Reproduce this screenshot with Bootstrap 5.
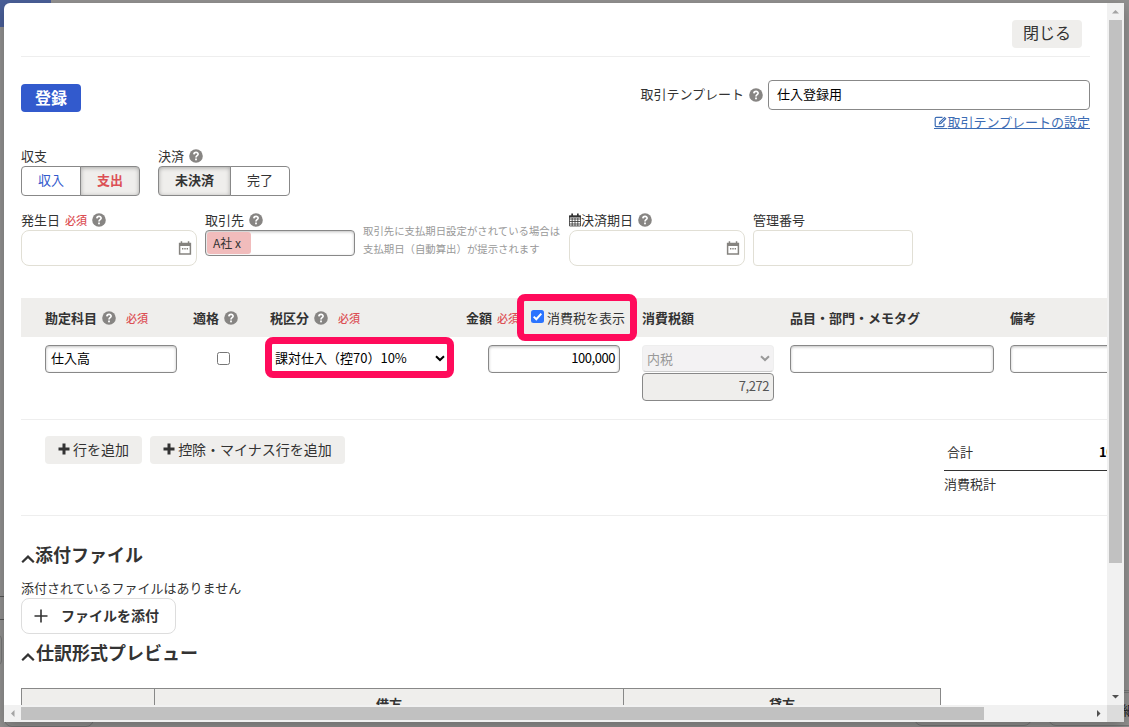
<!DOCTYPE html>
<html lang="ja">
<head>
<meta charset="utf-8">
<title>取引登録</title>
<link href="https://cdn.jsdelivr.net/npm/bootstrap@5.3.0/dist/css/bootstrap.min.css" rel="stylesheet">
<style>
body{width:1129px;height:727px;overflow:hidden;background:#929190;font:13px/20px "Noto Sans CJK JP",sans-serif;color:#333;padding:3px 5px 5px 4px;position:relative}
.back-item{position:absolute}
.dialog{width:1120px;height:719px;display:grid;grid-template:702px 17px / 1103px 17px;background:#fff;border-radius:6px 0 0 0;overflow:hidden}
.dialog-shadow{box-shadow:0 5px 14px rgba(0,0,0,.25);position:relative;width:1120px;border-radius:6px 0 0 0}
.view{overflow:hidden;padding-left:17px}
.head{width:1069px;height:54px;border-bottom:1px solid #eee;padding:17px 8px 0 0}
.soft{background:#efeeec;border-radius:4px;height:28px;color:#333;display:flex;align-items:center;justify-content:center;border:0;padding:0 0 2px;font-size:14px;line-height:20px}
.close-b{width:70px;font-size:16px;padding-bottom:4px}
.top-row{width:1069px;height:85px;padding-top:23px}
.save{width:60px;height:28px;background:#325acd;border-radius:4px;color:#fff;font-weight:700;font-size:16px;line-height:24px;padding:0 0 2px;border:0;margin-top:4px}
.tpl{width:322px;height:30px;border:1px solid #888;border-radius:4px;padding:0 8px;line-height:25px;color:#000;margin-left:5px}
.set-link{color:#3c6cb4;line-height:20px;margin-top:2px;text-decoration:underline}
.set-link svg{border-bottom:1px solid #3c6cb4;margin-top:1px}
.q{width:14px;height:14px;flex:none}
.lbl{height:20px;line-height:20px;display:flex;align-items:center;white-space:nowrap}
.req{color:#dc4f54;font-size:11px;font-weight:500}
.bt{border:1px solid #888;height:30px;line-height:25px;text-align:center;background:#fff}
.bt.on{background:#efeeec;font-weight:700;box-shadow:inset 0 1px 4px rgba(0,0,0,.3)}
.bt:first-child{border-radius:4px 0 0 4px}.bt:last-child{border-radius:0 4px 4px 0;margin-left:-1px}
.fields{height:88px;gap:8px;margin-top:14px}
.date{width:176px;height:36px;border:1px solid #e1dfd5;border-radius:8px;padding:0 4px;display:flex;align-items:center;justify-content:flex-end}
.inp{height:28px;border:1px solid #888;border-radius:4px;box-shadow:inset 0 1px 3px rgba(0,0,0,.25);background:#fff;color:#000;padding:0 5px;line-height:24px}
.num{letter-spacing:-.45px}
.tagbox{width:150px;height:26px;padding:1px}
.chip{background:#f1bcbc;border-radius:3px;width:44px;height:22px;font-size:12px;line-height:21px;padding-left:6px;color:#333}
.hint{font-size:10.4px;line-height:18px;color:#999;width:198px;padding-top:12px;white-space:nowrap}
.cols{display:grid;grid-template-columns:148px 77px 196px 176px 148px 220px 220px;padding-left:24px;width:1215px}
.thead-r{background:#efeeec;height:39px;align-items:center;font-weight:700}
.body-r{height:83px;padding-top:8px;border-bottom:1px solid #eee;align-items:start}
.body-r>*{min-width:0}
.cb{width:13px;height:13px;border:1px solid #767676;border-radius:2.5px;background:#fff;flex:none}
.cb.on{background:#2b74ff;border:0}
.mark-box{border:7px solid #ff0b5b;border-radius:8px}
.show-tax{position:absolute;left:51px;top:-14px;width:120px;height:47px;background:#efeeec;display:flex;align-items:center;font-weight:400;padding:1px 0 0 7px;white-space:nowrap}
.pick{width:189px;height:41px;margin:-8px 0 0 -5px;background:#fff;color:#000;display:flex;align-items:center;justify-content:space-between;padding:0 2px 0 3px;white-space:nowrap;border-radius:8px}
.dis{width:132px;height:27px;background:#f3f2f3;border-radius:4px;border:1px solid #eee;border-bottom:1px solid #ccc;color:#999;padding:0 3px 0 4px;display:flex;align-items:center;justify-content:space-between;margin-bottom:1px}
.actions{height:96px;width:1215px;border-bottom:1px solid #eee;padding:16px 0 0 24px}
.sum{width:260px;margin-left:599px;flex:none}
.sum1{height:35px;border-bottom:1px solid #333;padding:6px 0 0 3px}
.sec{font-size:18px;font-weight:700;line-height:26px;height:26px;display:flex;align-items:center}
.sec span{margin-top:-2px}
.attach{width:155px;height:36px;border:1px solid #ddd;border-radius:8px;font-weight:700;padding:0 0 1px 12px;display:flex;align-items:center;gap:13px;font-size:14px}
.attach span{margin-top:-1px}
.pv{width:920px;display:grid;grid-template-columns:132px 469px 317px;height:40px;border:1px solid #888;background:#efeeec;margin-top:22px;font-weight:700;text-align:center;line-height:29px}
.pv>div+div{border-left:1px solid #888}
.bar-v,.bar-h{background:#f1f1f1;display:flex;align-items:center}
.bar-v{flex-direction:column}
.arr{width:17px;height:17px;flex:none}
.th-v{width:13px;height:543px;background:#c1c1c1}
.th-h{height:13px;width:963px;background:#c1c1c1}
</style>
</head>
<body>
<svg width="0" height="0" style="position:absolute"><defs>
<symbol id="q" viewBox="0 0 14 14"><circle cx="7" cy="7" r="6.8" fill="#878583"/><path d="M4.9 5.4C5 2.7 9.2 2.8 9.1 5.2C9 6.7 7 6.7 7 8.4" fill="none" stroke="#fff" stroke-width="1.7"/><rect x="6.1" y="9.5" width="1.8" height="1.8" fill="#fff"/></symbol>
<symbol id="cal" viewBox="0 0 14 14"><path d="M1.6 2.5H12.4V12.9H1.6Z" fill="none" stroke="#85837f" stroke-width="1.5"/><path d="M1 2H13V5H1ZM2.7.3H4.2V3H2.7ZM9.8.3H11.3V3H9.8Z" fill="#85837f"/><path d="M4 7h1.4v1.4H4zM6.3 7h1.4v1.4H6.3zM8.6 7H10v1.4H8.6z" fill="#85837f"/></symbol>
<symbol id="chev" viewBox="0 0 10 7"><path d="M1 1.2L5 5L9 1.2" fill="none" stroke="currentColor" stroke-width="2"/></symbol>
<symbol id="plus" viewBox="0 0 12 12"><path d="M6 .5V11.5M.5 6H11.5" fill="none" stroke="#333" stroke-width="3"/></symbol>
<symbol id="up" viewBox="0 0 14 10"><path d="M1.2 8.3L7 2.6L12.8 8.3" fill="none" stroke="#333" stroke-width="2.2"/></symbol>
</defs></svg>
<div class="back-item" style="left:0;top:0;width:51px;height:27px;background:#4a5f98"></div>
<div class="back-item" style="left:0;top:596px;width:10px;height:24px;border:1px solid #555;border-left:0"></div>
<div class="back-item" style="left:-8px;top:635px;width:10px;height:30px;border:1px solid #777;border-radius:4px"></div>
<div class="back-item" style="left:1118px;top:692px;width:11px;border-top:1px solid #777"></div>
<div class="back-item text-nowrap" style="left:1122px;top:700px;width:7px;overflow:hidden;color:#222">細</div>
<div class="back-item" style="left:914px;top:690px;width:118px;height:36px;border:1px solid #777;border-radius:8px"></div>
<div class="back-item" style="left:1048px;top:690px;width:118px;height:36px;border:1px solid #777;border-radius:8px"></div>
<div class="back-item" style="left:4px;top:690px;width:90px;height:37px;border:1px solid #777;border-radius:8px"></div>

<div class="dialog-shadow"><div class="dialog">
<main class="view">
  <header class="head d-flex justify-content-end"><button class="soft close-b">閉じる</button></header>
  <div class="top-row d-flex justify-content-between align-items-start">
    <button class="save">登録</button>
    <div class="d-flex flex-column align-items-end">
      <div class="d-flex align-items-center"><span style="margin:-2px 5px 0 0">取引テンプレート</span><svg class="q"><use href="#q"/></svg><div class="tpl">仕入登録用</div></div>
      <a class="set-link d-flex align-items-center" href="#"><svg width="13" height="13" viewBox="0 0 13 12"><path d="M8.5 1.3H2.5Q1.2 1.3 1.2 2.6V9.4Q1.2 10.7 2.5 10.7H8.7Q10 10.7 10 9.4V7.4" fill="none" stroke="#3c6cb4" stroke-width="1.2"/><path d="M4.6 8.7L5.2 6.1L10.5.7L12.5 2.7L7.2 8Z" fill="#3c6cb4"/><path d="M6.2 6.9L10.6 2.5" stroke="#fff" stroke-width=".7"/></svg><span>取引テンプレートの設定</span></a>
    </div>
  </div>
  <div class="d-flex" style="gap:18px;padding-top:4px">
    <div><div class="lbl">収支</div><div class="d-flex"><div class="bt" style="width:60px;color:#325acd">収入</div><div class="bt on" style="width:60px;color:#dc4f54">支出</div></div></div>
    <div><div class="lbl">決済<svg class="q" style="margin-left:5px"><use href="#q"/></svg></div><div class="d-flex"><div class="bt on" style="width:73px">未決済</div><div class="bt" style="width:60px">完了</div></div></div>
  </div>
  <div class="fields d-flex">
    <div><div class="lbl">発生日<span class="req" style="margin:0 5px">必須</span><svg class="q"><use href="#q"/></svg></div><div class="date"><svg width="14" height="14"><use href="#cal"/></svg></div></div>
    <div><div class="lbl">取引先<svg class="q" style="margin-left:5px"><use href="#q"/></svg></div><div class="inp tagbox"><div class="chip">A社 x</div></div></div>
    <div class="hint">取引先に支払期日設定がされている場合は<br>支払期日（自動算出）が提示されます</div>
    <div><div class="lbl"><svg width="12" height="14" viewBox="0 0 12 14"><path d="M.5 3H11.5V13H.5ZM.5 6H11.5M.5 8.5H11.5M.5 11H11.5M3.2 5V13M6 5V13M8.8 5V13" fill="none" stroke="#333" stroke-width=".8"/><path d="M0 2.5H12V4.5H0ZM2.3.5H4V3H2.3ZM8 .5H9.7V3H8Z" fill="#333"/></svg>決済期日<svg class="q" style="margin-left:5px"><use href="#q"/></svg></div><div class="date"><svg width="14" height="14"><use href="#cal"/></svg></div></div>
    <div><div class="lbl">管理番号</div><div class="date" style="width:160px;border-radius:4px"></div></div>
  </div>
  <div class="cols thead-r">
    <div class="lbl">勘定科目<svg class="q" style="margin:0 10px 0 5px"><use href="#q"/></svg><span class="req">必須</span></div>
    <div class="lbl">適格<svg class="q" style="margin-left:5px"><use href="#q"/></svg></div>
    <div class="lbl">税区分<svg class="q" style="margin:0 10px 0 5px"><use href="#q"/></svg><span class="req">必須</span></div>
    <div class="lbl position-relative">金額<span class="req" style="margin-left:5px">必須</span><div class="show-tax mark-box"><span class="cb on" style="margin:-3px 3px 0 0"><svg class="d-block" width="13" height="13"><path d="M2.7 6.6L5.3 9.2L10.3 3.6" fill="none" stroke="#fff" stroke-width="2"/></svg></span>消費税を表示</div></div>
    <div>消費税額</div><div>品目・部門・メモタグ</div><div>備考</div>
  </div>
  <div class="cols body-r">
    <div class="inp" style="width:132px">仕入高</div>
    <div class="cb" style="margin:7px 0 0 24px"></div>
    <div class="pick mark-box"><span>課対仕入（控70）10%</span><svg width="10" height="7" style="margin-top:2px"><use href="#chev"/></svg></div>
    <div class="inp num text-end" style="width:132px;margin-left:22px;padding-right:4px">100,000</div>
    <div><div class="dis">内税<svg width="10" height="7"><use href="#chev"/></svg></div><div class="inp num text-end" style="width:132px;background:#efeeec;color:#555;box-shadow:none;padding-right:4px">7,272</div></div>
    <div class="inp" style="width:204px"></div><div class="inp" style="width:204px"></div>
  </div>
  <div class="actions d-flex">
    <button class="soft flex-shrink-0" style="width:97px;gap:3px"><svg width="12" height="12"><use href="#plus"/></svg>行を追加</button>
    <button class="soft flex-shrink-0 ms-2" style="width:195px;gap:3px"><svg width="12" height="12"><use href="#plus"/></svg>控除・マイナス行を追加</button>
    <div class="sum"><div class="sum1 d-flex">合計<b class="num" style="margin-left:126px;color:#000">100,000</b></div><div style="padding-top:3px">消費税計</div></div>
  </div>
  <h2 class="sec mb-0" style="margin-top:26px"><svg width="14" height="10" style="margin-top:8px"><use href="#up"/></svg><span>添付ファイル</span></h2>
  <div style="margin-top:10px">添付されているファイルはありません</div>
  <div class="attach"><svg width="14" height="14"><path d="M7 .5V13.5M.5 7H13.5" stroke="#333" stroke-width="1.6"/></svg><span>ファイルを添付</span></div>
  <h2 class="sec mb-0" style="margin-top:6px"><svg width="14" height="10" style="margin:8px 1px 0 0"><use href="#up"/></svg><span>仕訳形式プレビュー</span></h2>
  <div class="pv"><div></div><div>借方</div><div>貸方</div></div>
</main>
<div class="bar-v"><svg class="arr"><path d="M5 10.5L8.5 7L12 10.5Z" fill="#a3a3a3"/></svg><div class="th-v"></div><svg class="arr mt-auto"><path d="M5 7L8.5 10.5L12 7Z" fill="#505050"/></svg></div>
<div class="bar-h"><svg class="arr"><path d="M10.5 5L7 8.5L10.5 12Z" fill="#a3a3a3"/></svg><div class="th-h"></div><svg class="arr ms-auto"><path d="M7 5L10.5 8.5L7 12Z" fill="#505050"/></svg></div>
<div style="background:#dcdcdc"></div>
</div></div>
<script src="https://cdn.jsdelivr.net/npm/bootstrap@5.3.0/dist/js/bootstrap.bundle.min.js"></script>
</body>
</html>
